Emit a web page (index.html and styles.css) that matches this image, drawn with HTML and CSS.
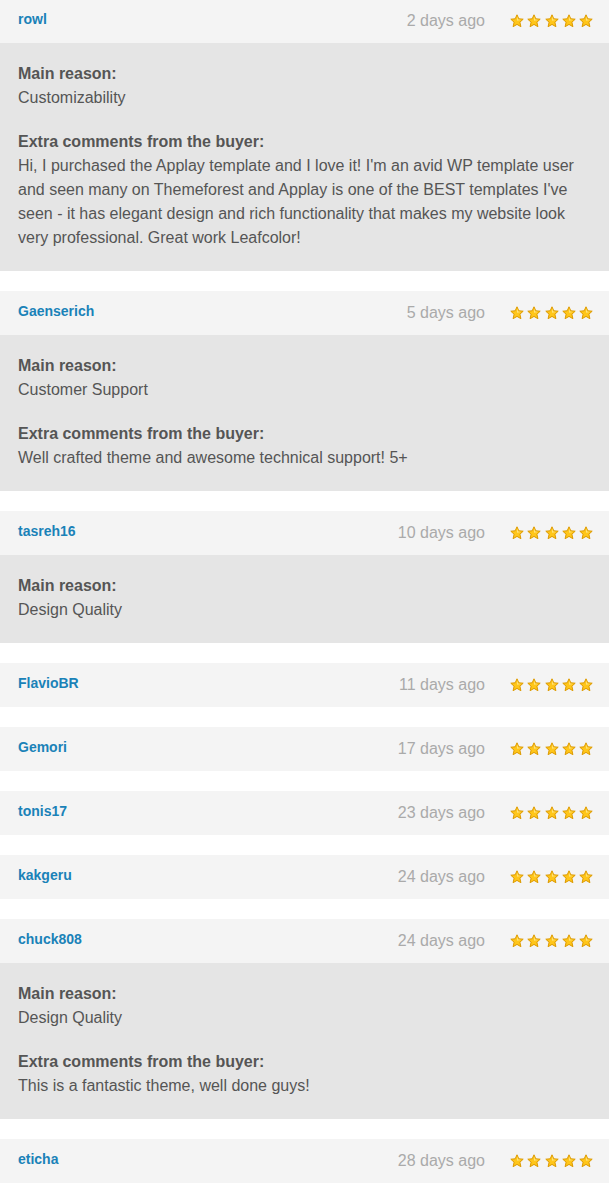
FILE: index.html
```html
<!DOCTYPE html>
<html>
<head>
<meta charset="utf-8">
<link rel="stylesheet" href="styles.css">
</head>
<body>
<svg width="0" height="0" class="defs">
  <defs>
    <symbol id="star" viewBox="0 0 14 14">
      <path d="M7 0.8 L8.8 4.8 L13.2 5.2 L9.9 8.2 L10.9 12.7 L7 10.4 L3.1 12.7 L4.1 8.2 L0.8 5.2 L5.2 4.8 Z" fill="#ffc61a" stroke="#dd9a00" stroke-width="1" stroke-linejoin="round"/>
      <path d="M7 2.6 L8.2 5.6 L11.2 5.9 L7 6.8 Z" fill="#ffe27a"/>
    </symbol>
  </defs>
</svg>
<div class="reviews">

  <div class="review">
    <div class="head"><span class="user">rowl</span><span class="date">2 days ago</span><span class="stars"><svg><use href="#star"/></svg><svg><use href="#star"/></svg><svg><use href="#star"/></svg><svg><use href="#star"/></svg><svg><use href="#star"/></svg></span></div>
    <div class="body">
      <p><b>Main reason:</b><br>Customizability</p>
      <p><b>Extra comments from the buyer:</b><br>Hi, I purchased the Applay template and I love it! I'm an avid WP template user and seen many on Themeforest and Applay is one of the BEST templates I've seen - it has elegant design and rich functionality that makes my website look very professional. Great work Leafcolor!</p>
    </div>
  </div>

  <div class="review">
    <div class="head"><span class="user">Gaenserich</span><span class="date">5 days ago</span><span class="stars"><svg><use href="#star"/></svg><svg><use href="#star"/></svg><svg><use href="#star"/></svg><svg><use href="#star"/></svg><svg><use href="#star"/></svg></span></div>
    <div class="body">
      <p><b>Main reason:</b><br>Customer Support</p>
      <p><b>Extra comments from the buyer:</b><br>Well crafted theme and awesome technical support! 5+</p>
    </div>
  </div>

  <div class="review">
    <div class="head"><span class="user">tasreh16</span><span class="date">10 days ago</span><span class="stars"><svg><use href="#star"/></svg><svg><use href="#star"/></svg><svg><use href="#star"/></svg><svg><use href="#star"/></svg><svg><use href="#star"/></svg></span></div>
    <div class="body">
      <p><b>Main reason:</b><br>Design Quality</p>
    </div>
  </div>

  <div class="review">
    <div class="head"><span class="user">FlavioBR</span><span class="date">11 days ago</span><span class="stars"><svg><use href="#star"/></svg><svg><use href="#star"/></svg><svg><use href="#star"/></svg><svg><use href="#star"/></svg><svg><use href="#star"/></svg></span></div>
  </div>

  <div class="review">
    <div class="head"><span class="user">Gemori</span><span class="date">17 days ago</span><span class="stars"><svg><use href="#star"/></svg><svg><use href="#star"/></svg><svg><use href="#star"/></svg><svg><use href="#star"/></svg><svg><use href="#star"/></svg></span></div>
  </div>

  <div class="review">
    <div class="head"><span class="user">tonis17</span><span class="date">23 days ago</span><span class="stars"><svg><use href="#star"/></svg><svg><use href="#star"/></svg><svg><use href="#star"/></svg><svg><use href="#star"/></svg><svg><use href="#star"/></svg></span></div>
  </div>

  <div class="review">
    <div class="head"><span class="user">kakgeru</span><span class="date">24 days ago</span><span class="stars"><svg><use href="#star"/></svg><svg><use href="#star"/></svg><svg><use href="#star"/></svg><svg><use href="#star"/></svg><svg><use href="#star"/></svg></span></div>
  </div>

  <div class="review">
    <div class="head"><span class="user">chuck808</span><span class="date">24 days ago</span><span class="stars"><svg><use href="#star"/></svg><svg><use href="#star"/></svg><svg><use href="#star"/></svg><svg><use href="#star"/></svg><svg><use href="#star"/></svg></span></div>
    <div class="body">
      <p><b>Main reason:</b><br>Design Quality</p>
      <p><b>Extra comments from the buyer:</b><br>This is a fantastic theme, well done guys!</p>
    </div>
  </div>

  <div class="review">
    <div class="head"><span class="user">eticha</span><span class="date">28 days ago</span><span class="stars"><svg><use href="#star"/></svg><svg><use href="#star"/></svg><svg><use href="#star"/></svg><svg><use href="#star"/></svg><svg><use href="#star"/></svg></span></div>
  </div>

</div>
</body>
</html>
```

FILE: styles.css
```css
html, body {
  margin: 0;
  padding: 0;
  background: #ffffff;
}
body {
  font-family: "Liberation Sans", Arial, sans-serif;
  color: #555555;
}
.defs {
  position: absolute;
  width: 0;
  height: 0;
}
.reviews {
  display: flex;
  flex-direction: column;
  gap: 20px;
  margin-top: -1px;
}
.head {
  height: 44px;
  box-sizing: border-box;
  background: #f4f4f4;
  display: flex;
  align-items: center;
  padding: 0 16px 1px 18px;
}
.user {
  font-size: 14px;
  font-weight: bold;
  color: #1a82b8;
  flex: 1;
  margin-top: -3px;
}
.date {
  font-size: 16px;
  color: #aaaaaa;
  margin-right: 25px;
}
.stars {
  display: flex;
  gap: 3.25px;
}
.stars svg {
  width: 14px;
  height: 14px;
  display: block;
}
.body {
  background: #e5e5e5;
  padding: 19px 18px 21px 18px;
  font-size: 16px;
  line-height: 24px;
}
.body p {
  margin: 0 0 20px 0;
}
.body p:last-child {
  margin-bottom: 0;
}
.body b {
  font-weight: bold;
}
```
